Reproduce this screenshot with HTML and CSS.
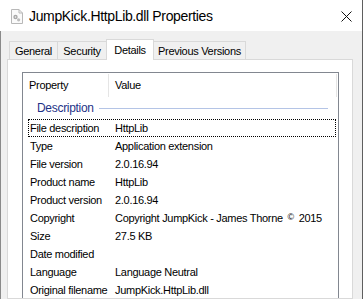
FILE: index.html
```html
<!DOCTYPE html>
<html lang="en">
<head>
    <meta charset="UTF-8">
    <title>JumpKick.HttpLib.dll Properties</title>
    <link rel="stylesheet" href="styles.css">
</head>
<body>
    <div class="window">
        <div class="titlebar">
            <svg class="file-icon" width="12" height="15" viewBox="0 0 12 15">
                <path d="M0.5 0.5h7.5l3.5 3.5v10.5h-11z" fill="#fafafa" stroke="#b8b8b8"/>
                <path d="M8 0.5v3.5h3.5" fill="none" stroke="#b8b8b8"/>
                <circle cx="4.5" cy="8" r="2.2" fill="#a8a8a8"/>
                <circle cx="4.5" cy="8" r="0.8" fill="#f4f4f4"/>
                <circle cx="7.6" cy="10.8" r="1.6" fill="#bcbcbc"/>
            </svg>
            <div class="title">JumpKick.HttpLib.dll Properties</div>
            <svg class="close" width="11" height="11" viewBox="0 0 11 11">
                <path d="M0.5 0.5l10 10M10.5 0.5l-10 10" stroke="#111" stroke-width="1"/>
            </svg>
        </div>

        <div class="dialog">
            <div class="tabs">
                <div class="tab tab-general">General</div>
                <div class="tab tab-security">Security</div>
                <div class="tab tab-details active">Details</div>
                <div class="tab tab-previous">Previous Versions</div>
            </div>

            <div class="panel">
                <div class="list">
                    <div class="list-header">
                        <div class="head-cell head-prop">Property</div>
                        <div class="head-cell head-value">Value</div>
                    </div>

                    <div class="group">
                        <span class="group-name">Description</span>
                        <span class="group-line"></span>
                    </div>

                    <div class="row focused"><span class="prop">File description</span><span class="value">HttpLib</span></div>
                    <div class="row"><span class="prop">Type</span><span class="value">Application extension</span></div>
                    <div class="row"><span class="prop">File version</span><span class="value">2.0.16.94</span></div>
                    <div class="row"><span class="prop">Product name</span><span class="value">HttpLib</span></div>
                    <div class="row"><span class="prop">Product version</span><span class="value">2.0.16.94</span></div>
                    <div class="row"><span class="prop">Copyright</span><span class="value">Copyright JumpKick - James Thorne <sup class="copy">©</sup> 2015</span></div>
                    <div class="row"><span class="prop">Size</span><span class="value">27.5 KB</span></div>
                    <div class="row"><span class="prop">Date modified</span><span class="value"></span></div>
                    <div class="row"><span class="prop">Language</span><span class="value">Language Neutral</span></div>
                    <div class="row"><span class="prop">Original filename</span><span class="value">JumpKick.HttpLib.dll</span></div>
                </div>
            </div>
        </div>
    </div>
</body>
</html>
```

FILE: styles.css
```css
:root {
    --dialog-bg: #f0f0f0;
    --tab-border: #d9d9d9;
    --list-border: #828790;
    --group-text: #1e3287;
    --group-line: #b4c4e6;
    --text: #000;
}

* {
    margin: 0;
    padding: 0;
    box-sizing: border-box;
}

html, body {
    width: 363px;
    height: 299px;
    overflow: hidden;
}

body {
    font-family: "Liberation Sans", Arial, sans-serif;
    font-size: 11px;
    letter-spacing: -0.3px;
    color: var(--text);
    background: #fff;
}

.window {
    height: 299px;
    display: flex;
    flex-direction: column;
    border-right: 1px solid #5f5f5f;
}

/* title bar */
.titlebar {
    height: 31px;
    flex: none;
    display: flex;
    align-items: center;
    background: #fff;
    padding-left: 11px;
}

.file-icon {
    flex: none;
    margin-top: 1px;
}

.title {
    font-size: 14px;
    letter-spacing: -0.35px;
    margin-left: 6px;
    flex: 1;
    padding-top: 1px;
}

.close {
    margin-right: 10px;
    margin-top: 1px;
}

/* dialog body */
.dialog {
    flex: 1;
    background: var(--dialog-bg);
    border-left: 1px solid #8a8a8a;
    padding: 7px 9px 0 6px;
    display: flex;
    flex-direction: column;
    min-height: 0;
}

.tabs {
    display: flex;
    align-items: flex-end;
    height: 21px;
    padding-left: 2px;
    position: relative;
    z-index: 1;
}

.tab {
    height: 18px;
    border: 1px solid var(--tab-border);
    border-bottom: none;
    background: var(--dialog-bg);
    display: flex;
    align-items: center;
    justify-content: center;
    padding-top: 1px;
    margin-right: -1px;
}

.tab-general { width: 49px; }
.tab-security { width: 50px; }
.tab-details { width: 48px; }
.tab-previous { width: 93px; }

.tab.active {
    height: 21px;
    background: #fff;
    margin-bottom: -1px;
    padding-top: 0;
    padding-bottom: 1px;
    position: relative;
    z-index: 2;
}

.panel {
    flex: 1;
    background: #fff;
    border: 1px solid var(--tab-border);
    padding: 12px 13px 0 14px;
    min-height: 0;
}

/* list view */
.list {
    border: 1px solid var(--list-border);
    border-bottom: none;
    height: 100%;
}

.list-header {
    display: flex;
    height: 24px;
    align-items: center;
}

.head-cell {
    height: 23px;
    display: flex;
    align-items: center;
    border-right: 1px solid #e5e5e5;
}

.head-prop {
    width: 86px;
    padding-left: 6px;
}

.head-value {
    width: 228px;
    padding-left: 6px;
}

.group {
    height: 22px;
    display: flex;
    align-items: center;
    padding: 0 10px 0 14px;
}

.group-name {
    color: var(--group-text);
    font-size: 12px;
    letter-spacing: -0.3px;
}

.group-line {
    flex: 1;
    height: 1px;
    background: var(--group-line);
    margin-left: 5px;
    margin-top: 1px;
}

.row {
    height: 18px;
    display: flex;
    align-items: center;
    margin: 0 2px 0 5px;
    position: relative;
}

.row.focused::after {
    content: '';
    position: absolute;
    left: 0;
    right: 0;
    top: 0;
    height: 16px;
    border: 1px dotted #000;
}

.prop {
    width: 87px;
    padding-left: 2px;
    white-space: nowrap;
}

.value {
    white-space: nowrap;
}

.copy {
    font-size: 9px;
    vertical-align: 2px;
    margin: 0 2px;
}
```
